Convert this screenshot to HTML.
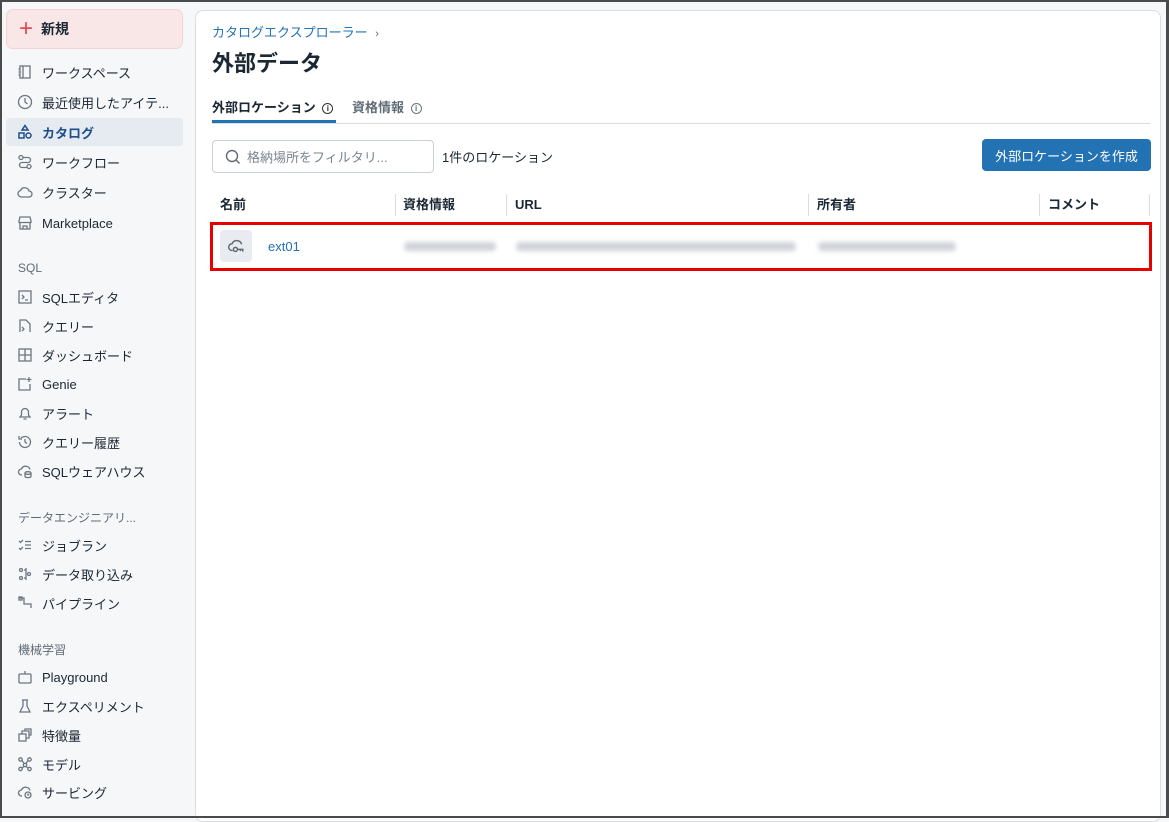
<!DOCTYPE html>
<html><head><meta charset="utf-8"><style>
*{box-sizing:border-box;margin:0;padding:0}
body{width:1169px;height:818px;overflow:hidden;background:#f6f7f9;font-family:"Liberation Sans","Noto Sans CJK JP",sans-serif;color:#1b2733;position:relative}
.frame{position:absolute;left:0;top:0;width:1169px;height:818px;border:2px solid #4a4a4a;border-right-width:3px;pointer-events:none;z-index:10}
.sb{position:absolute;left:0;top:0;width:194px;height:818px}
.new{position:absolute;left:6px;top:9px;width:177px;height:40px;background:#f9e7e7;border:1px solid #f3d3d3;border-radius:7px;font-weight:bold;font-size:14px;display:flex;align-items:center;padding-left:12px}
.new span{color:#e5484d;font-size:24px;font-weight:normal;margin-right:8px;line-height:1}
.it{position:absolute;left:6px;width:177px;height:28px;display:flex;align-items:center;padding-left:11px;font-size:13px;color:#1b2733;border-radius:4px}
.it svg{width:16px;height:16px;margin-right:9px;flex:none}
.it.act{background:#e5ebf1;color:#1f4e8c;font-weight:bold}
.lb{position:absolute;left:18px;font-size:12px;color:#5f6b76}
.main{position:absolute;left:195px;top:10px;width:966px;height:812px;background:#fff;border:1px solid #d8dde2;border-radius:8px}
.abs{position:absolute}
.hd span{line-height:22px}
.blur{position:absolute;height:9px;background:#cfd3d8;filter:blur(2.5px);border-radius:4px}
</style></head><body>
<div class="frame"></div>
<div class="sb">
<div class="new"><span>+</span>新規</div>
<div class="it" style="top:58px"><svg viewBox="0 0 16 16" fill="none" stroke="#6b7681" stroke-width="1.3"><rect x="3" y="2" width="10" height="12"/><path d="M6 2v12M1.5 5h2M1.5 8h2M1.5 11h2"/></svg>ワークスペース</div>
<div class="it" style="top:88px"><svg viewBox="0 0 16 16" fill="none" stroke="#6b7681" stroke-width="1.3"><circle cx="8" cy="8" r="6.5"/><path d="M8 4v4l2.5 2"/></svg>最近使用したアイテ...</div>
<div class="it act" style="top:118px"><svg viewBox="0 0 16 16" fill="none" stroke="#1f4e8c" stroke-width="1.5"><path d="M8 1.5l3 4.5H5z"/><rect x="2" y="9" width="5" height="5"/><circle cx="11.5" cy="11.5" r="2.5"/></svg>カタログ</div>
<div class="it" style="top:148px"><svg viewBox="0 0 16 16" fill="none" stroke="#6b7681" stroke-width="1.3"><circle cx="4" cy="3.5" r="2"/><circle cx="12" cy="12.5" r="2"/><path d="M6 3.5h5a2.5 2.5 0 010 5H5a2.5 2.5 0 000 5h5"/></svg>ワークフロー</div>
<div class="it" style="top:178px"><svg viewBox="0 0 16 16" fill="none" stroke="#6b7681" stroke-width="1.3"><path d="M4.5 13h7.5a3 3 0 000-6 4.5 4.5 0 00-8.5-.5A3.3 3.3 0 004.5 13z"/></svg>クラスター</div>
<div class="it" style="top:209px"><svg viewBox="0 0 16 16" fill="none" stroke="#6b7681" stroke-width="1.3"><path d="M2 6l1-4h10l1 4v1.5H2zM3 7.5V14h10V7.5M6 14v-3h4v3"/></svg>Marketplace</div>
<div class="lb" style="top:261px">SQL</div>
<div class="it" style="top:283px"><svg viewBox="0 0 16 16" fill="none" stroke="#6b7681" stroke-width="1.3"><rect x="2" y="2" width="12" height="12"/><path d="M5 6l2 2-2 2M8 11h3"/></svg>SQLエディタ</div>
<div class="it" style="top:312px"><svg viewBox="0 0 16 16" fill="none" stroke="#6b7681" stroke-width="1.3"><path d="M3 14V2h6l4 4v8M5 9l2 2-2 2"/></svg>クエリー</div>
<div class="it" style="top:341px"><svg viewBox="0 0 16 16" fill="none" stroke="#6b7681" stroke-width="1.3"><rect x="2" y="2" width="12" height="12"/><path d="M8 2v12M2 8h12"/></svg>ダッシュボード</div>
<div class="it" style="top:370px"><svg viewBox="0 0 16 16" fill="none" stroke="#6b7681" stroke-width="1.3"><path d="M9 3H2v11h11V8M12 1v5M9.5 3.5h5"/></svg>Genie</div>
<div class="it" style="top:399px"><svg viewBox="0 0 16 16" fill="none" stroke="#6b7681" stroke-width="1.3"><path d="M3 12h10l-1.5-2V7a3.5 3.5 0 00-7 0v3zM6.5 14h3"/></svg>アラート</div>
<div class="it" style="top:428px"><svg viewBox="0 0 16 16" fill="none" stroke="#6b7681" stroke-width="1.3"><path d="M2.5 8a5.5 5.5 0 101.6-3.9M2 2v3h3M8 5v3l2 1.5"/></svg>クエリー履歴</div>
<div class="it" style="top:457px"><svg viewBox="0 0 16 16" fill="none" stroke="#6b7681" stroke-width="1.3"><path d="M5 12H4.5a3 3 0 010-6 4.5 4.5 0 018.5.5"/><ellipse cx="11" cy="10" rx="3" ry="1.3"/><path d="M8 10v3.3c0 .7 1.3 1.3 3 1.3s3-.6 3-1.3V10"/></svg>SQLウェアハウス</div>
<div class="lb" style="top:509px">データエンジニアリ...</div>
<div class="it" style="top:531px"><svg viewBox="0 0 16 16" fill="none" stroke="#6b7681" stroke-width="1.3"><path d="M2 4l1.5 1.5L6 3M2 11l1.5 1.5L6 10M8 4.5h6M8 8h6M8 11.5h6"/></svg>ジョブラン</div>
<div class="it" style="top:560px"><svg viewBox="0 0 16 16" fill="none" stroke="#6b7681" stroke-width="1.3"><circle cx="4" cy="4" r="1.5"/><circle cx="4" cy="12" r="1.5"/><circle cx="12" cy="8" r="1.5"/><path d="M9 2v12M7 4h2M7 12h2"/></svg>データ取り込み</div>
<div class="it" style="top:589px"><svg viewBox="0 0 16 16" fill="none" stroke="#6b7681" stroke-width="1.3"><path d="M2 3h5v6h7v4"/><rect x="2" y="2" width="3" height="3"/></svg>パイプライン</div>
<div class="lb" style="top:641px">機械学習</div>
<div class="it" style="top:663px"><svg viewBox="0 0 16 16" fill="none" stroke="#6b7681" stroke-width="1.3"><rect x="2" y="5" width="12" height="9" rx="1"/><path d="M8 5V2M6 9h.1M10 9h.1"/></svg>Playground</div>
<div class="it" style="top:692px"><svg viewBox="0 0 16 16" fill="none" stroke="#6b7681" stroke-width="1.3"><path d="M5 2h6M6 2v6L3 14h10L10 8V2"/></svg>エクスペリメント</div>
<div class="it" style="top:721px"><svg viewBox="0 0 16 16" fill="none" stroke="#6b7681" stroke-width="1.3"><rect x="2" y="7" width="7" height="7"/><path d="M5 7V4h7v7H9M8 4V2h6v6h-2"/></svg>特徴量</div>
<div class="it" style="top:750px"><svg viewBox="0 0 16 16" fill="none" stroke="#6b7681" stroke-width="1.3"><circle cx="3.5" cy="3.5" r="1.7"/><circle cx="12.5" cy="3.5" r="1.7"/><circle cx="8" cy="9" r="1.7"/><circle cx="3.5" cy="13" r="1.7"/><circle cx="12.5" cy="13" r="1.7"/><path d="M5 4.5l2 3M11 4.5l-2 3M7 10.5l-2 1.5M9 10.5l2 1.5"/></svg>モデル</div>
<div class="it" style="top:778px"><svg viewBox="0 0 16 16" fill="none" stroke="#6b7681" stroke-width="1.3"><path d="M5 12H4.5a3 3 0 010-6 4.5 4.5 0 018.5.5"/><circle cx="11" cy="11" r="3"/><path d="M11 9.5V11h1.3"/></svg>サービング</div>
</div>
<div class="main">
<div class="abs" style="left:16px;top:11px;font-size:13px;color:#2272b4">カタログエクスプローラー <span style="color:#5f6b76;font-size:11px;margin-left:4px">›</span></div>
<div class="abs" style="left:16px;top:35px;font-size:22px;font-weight:bold">外部データ</div>
<div class="abs" style="left:16px;top:86px;font-size:13px;font-weight:bold">外部ロケーション <span style="display:inline-block;width:11px;height:11px;border:1.3px solid #333;border-radius:50%;font-size:8px;text-align:center;line-height:9px;vertical-align:1px;margin-left:3px">i</span></div>
<div class="abs" style="left:16px;top:109px;width:124px;height:3px;background:#2272b4"></div>
<div class="abs" style="left:156px;top:86px;font-size:13px;font-weight:bold;color:#5f6b76">資格情報 <span style="display:inline-block;width:11px;height:11px;border:1.3px solid #6b7681;border-radius:50%;font-size:8px;text-align:center;line-height:9px;vertical-align:1px;margin-left:3px">i</span></div>
<div class="abs" style="left:16px;top:112px;width:938px;height:1px;background:#d8dde2"></div>
<div class="abs" style="left:16px;top:129px;width:222px;height:33px;border:1px solid #cbd1d8;border-radius:4px;font-size:13px;color:#7a8590;display:flex;align-items:center;padding-left:12px"><svg width="16" height="16" viewBox="0 0 16 16" fill="none" stroke="#5f6b76" stroke-width="1.4" style="margin-right:6px"><circle cx="7" cy="7" r="5.5"/><path d="M11 11l3.5 3.5"/></svg>格納場所をフィルタリ...</div>
<div class="abs" style="left:246px;top:136px;font-size:13px">1件のロケーション</div>
<div class="abs" style="left:786px;top:128px;width:169px;height:32px;background:#2272b4;border-radius:4px;color:#fff;font-size:13px;display:flex;align-items:center;justify-content:center">外部ロケーションを作成</div>
<div class="abs hd" style="left:16px;top:183px;width:938px;height:24px;font-size:13px;font-weight:bold">
<span class="abs" style="left:8px;top:0">名前</span>
<span class="abs" style="left:183px;top:0;width:1px;height:22px;background:#d8dde2"></span><span class="abs" style="left:191px;top:0">資格情報</span>
<span class="abs" style="left:294px;top:0;width:1px;height:22px;background:#d8dde2"></span><span class="abs" style="left:303px;top:0">URL</span>
<span class="abs" style="left:596px;top:0;width:1px;height:22px;background:#d8dde2"></span><span class="abs" style="left:605px;top:0">所有者</span>
<span class="abs" style="left:827px;top:0;width:1px;height:22px;background:#d8dde2"></span><span class="abs" style="left:836px;top:0">コメント</span>
<span class="abs" style="left:937px;top:0;width:1px;height:22px;background:#d8dde2"></span>
</div>
<div class="abs" style="left:14px;top:211px;width:942px;height:49px;border:3px solid #e60000"></div>
<div class="abs" style="left:24px;top:219px;width:32px;height:32px;background:#e8ebef;border-radius:4px;display:flex;align-items:center;justify-content:center"><svg width="18" height="18" viewBox="0 0 16 16" fill="none" stroke="#5f6b76" stroke-width="1.3"><path d="M5 12H4.5a3 3 0 010-6 4.5 4.5 0 018.5.5"/><circle cx="7.5" cy="11" r="1.8"/><path d="M9.3 11H14v2M12 11v1.5"/></svg></div>
<div class="abs" style="left:72px;top:228px;font-size:13px;color:#2272b4">ext01</div>
<div class="blur" style="left:208px;top:231px;width:92px"></div>
<div class="blur" style="left:320px;top:231px;width:280px"></div>
<div class="blur" style="left:622px;top:231px;width:138px"></div>
</div>
</body></html>
